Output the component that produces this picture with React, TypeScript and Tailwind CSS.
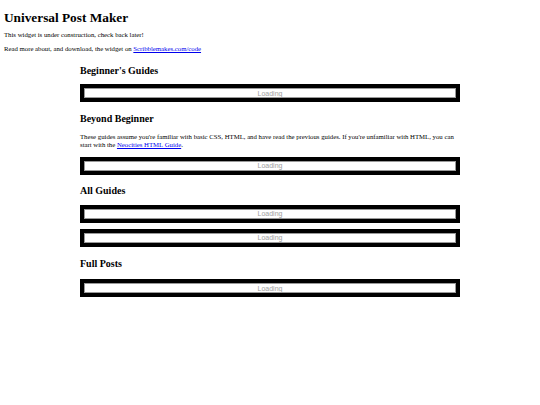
import React from "react";

function Box() {
  return (
    <div className="w-[380px] h-[18px] border-[4px] border-black bg-white">
      <div className="h-full border border-[#9a9a9a] flex items-center justify-center">
        <span className="text-[7px] leading-none text-[#a0a0a0] font-['Liberation_Sans',Arial,sans-serif]">Loading</span>
      </div>
    </div>
  );
}

function H2({ children, mt, mb }: { children: React.ReactNode; mt: string; mb: string }) {
  return (
    <h2 className={`${mt} ${mb} text-[10px] leading-[11.5px] font-bold font-['Liberation_Serif','Times_New_Roman',serif]`}>{children}</h2>
  );
}

export default function App() {
  return (
    <div className="w-[540px] h-[405px] bg-white text-black font-['Liberation_Serif','Times_New_Roman',serif] pl-[4px] flex flex-col">
      <h1 className="mt-[9.5px] text-[13.3px] leading-[15px] font-bold">Universal Post Maker</h1>
      <p className="mt-[6.75px] text-[6.75px] leading-[7.5px]">This widget is under construction, check back later!</p>
      <p className="mt-[6px] text-[6.75px] leading-[7.5px]">
        Read more about, and download, the widget on{" "}
        <a href="#" className="text-[#0000ee] underline">Scribblemakes.com/code</a>
      </p>
      <div className="ml-[76px] w-[380px] flex flex-col">
        <H2 mt="mt-[13px]" mb="mb-[7.5px]">Beginner's Guides</H2>
        <Box />
        <H2 mt="mt-[10.5px]" mb="mb-[8px]">Beyond Beginner</H2>
        <p className="mt-[0.75px] text-[6.75px] leading-[7.5px]">
          These guides assume you're familiar with basic CSS, HTML, and have read the previous guides. If you're unfamiliar with HTML, you can start with the{" "}
          <a href="#" className="text-[#0000ee] underline">Neocities HTML Guide</a>.
        </p>
        <div className="mt-[8.75px]"><Box /></div>
        <H2 mt="mt-[10.5px]" mb="mb-[8px]">All Guides</H2>
        <Box />
        <div className="mt-[6px]"><Box /></div>
        <H2 mt="mt-[11.5px]" mb="mb-[9.5px]">Full Posts</H2>
        <Box />
      </div>
    </div>
  );
}
